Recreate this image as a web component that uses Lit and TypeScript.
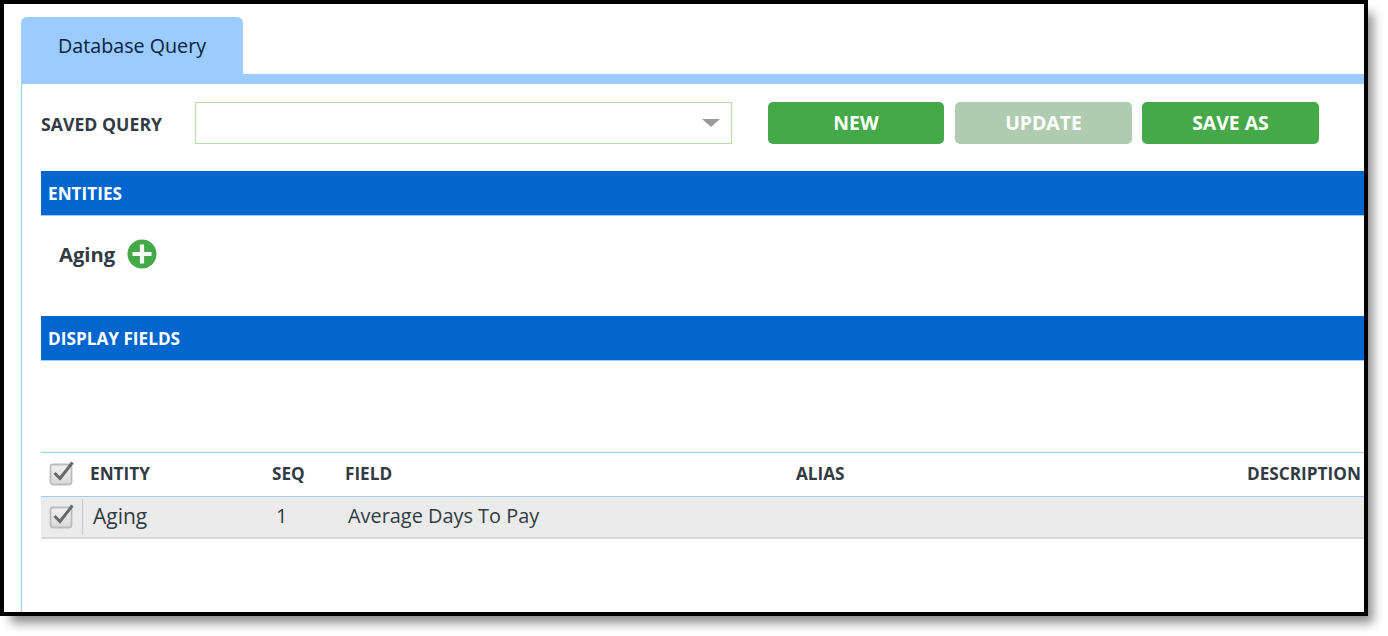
import { LitElement, html, css } from "lit";
import { customElement } from "lit/decorators.js";

const check = () => html`<svg class="cb" width="28" height="28" viewBox="0 0 28 28">
  <defs><linearGradient id="g" x1="0" y1="0" x2="0" y2="1"><stop offset="0" stop-color="#f2f2f2"/><stop offset="1" stop-color="#d8d8d8"/></linearGradient></defs>
  <rect x="2.5" y="6.5" width="21" height="20" rx="2.5" fill="url(#g)" stroke="#bcbcbc" stroke-width="1.8"/>
  <path d="M6.5 15 L12 20.5 L24.5 4.5" fill="none" stroke="#65696c" stroke-width="3"/>
</svg>`;

@customElement("app-root")
export class AppRoot extends LitElement {
  static styles = css`
    :host { display: block; width: 1388px; height: 636px; background: #fff; overflow: hidden;
      font-family: "Open Sans", "Noto Sans", sans-serif; color: #323b43; }
    .frame { box-sizing: border-box; width: 1368px; height: 616px; border: 4px solid #000; background: #fff;
      box-shadow: 8px 10px 10px -3px rgba(0,0,0,.45); padding: 13px 0 0 17px; overflow: hidden; display: flex; flex-direction: column; }
    .tab { box-sizing: border-box; width: 222px; height: 57px; background: #9bcbff; border-radius: 6px 6px 0 0;
      padding-left: 37px; padding-top: 15px; font-size: 19.7px; line-height: 28px; color: #0a2240; }
    .panel { flex: 1; border-left: 1px solid #9bcbff; border-top: 10px solid #9bcbff; padding: 18px 0 0 19px; }
    .query { display: flex; align-items: center; height: 42px; }
    .label { width: 154px; font-size: 17.7px; font-weight: 700; line-height: 20px; padding-top: 2px; white-space: nowrap; }
    .select { box-sizing: border-box; width: 537px; height: 42px; border: 1px solid #b7dca2; display: flex;
      align-items: center; justify-content: flex-end; padding-right: 11px; margin-right: 36px; }
    .arrow { width: 0; height: 0; border-left: 9px solid transparent; border-right: 9px solid transparent; border-top: 8px solid #9a9a9a; }
    .btn { height: 42px; width: 176px; border-radius: 5px; background: #45a949; color: #fff; font-size: 19.4px; font-weight: 700;
      display: flex; align-items: center; justify-content: center; margin-right: 11px; padding-bottom: 1px; box-sizing: border-box; }
    .btn.off { background: #afcbb0; width: 177px; margin-right: 10px; }
    .btn.last { width: 177px; }
    .bar { box-sizing: border-box; height: 45px; background: #0366cf; border-bottom: 1px solid #9bcbff; color: #fff;
      font-size: 17.2px; font-weight: 700; padding-left: 7px; display: flex; align-items: center; }
    .ent { margin-top: 27px; }
    .chip { display: flex; align-items: center; gap: 12px; height: 30px; margin: 24px 0 46px 18px; font-size: 20.2px; font-weight: 700; }
    .chip span { padding-bottom: 2px; }
    .chip svg { display: block; margin-top: -2px; }
    .gap { height: 91px; }
    .row { display: grid; grid-template-columns: 42px 182px 73px 451px 451px 1fr; align-items: center; }
    .head { box-sizing: content-box; height: 43px; border-top: 1px solid #9bcbff; border-bottom: 1px solid #9bcbff; font-size: 17.2px; font-weight: 700; }
    .head > span { padding-left: 7px; padding-bottom: 3px; white-space: nowrap; }
    .data { height: 40px; background: #ebebeb; border-bottom: 2px solid #d6d6d6; font-size: 19.9px; }
    .data > span { padding-left: 11px; padding-bottom: 4px; white-space: nowrap; }
    .data > span.entity { font-size: 21px; padding-left: 10px; padding-bottom: 2px; }
    .data > span.seq { padding-left: 11px; }
    .data > span.field { padding-left: 10px; }
    .boxcell { display: flex; align-items: center; justify-content: center; height: 100%; }
    .data .boxcell { border-right: 1px solid #c9c9c9; box-sizing: border-box; height: 36px; }
    .cb { display: block; margin-top: -5px; }
  `;

  render() {
    return html`<div class="frame">
      <div class="tab">Database Query</div>
      <div class="panel">
        <div class="query">
          <div class="label">SAVED QUERY</div>
          <div class="select"><div class="arrow"></div></div>
          <div class="btn">NEW</div>
          <div class="btn off">UPDATE</div>
          <div class="btn last">SAVE AS</div>
        </div>
        <div class="bar ent">ENTITIES</div>
        <div class="chip"><span>Aging</span>
          <svg width="30" height="30" viewBox="0 0 30 30">
            <circle cx="15" cy="15" r="14.5" fill="#45a949"/>
            <path d="M15 5.5v19M5.5 15h19" stroke="#fff" stroke-width="4.2"/>
          </svg>
        </div>
        <div class="bar">DISPLAY FIELDS</div>
        <div class="gap"></div>
        <div class="row head">
          <div class="boxcell">${check()}</div>
          <span>ENTITY</span><span>SEQ</span><span>FIELD</span><span>ALIAS</span><span>DESCRIPTION</span>
        </div>
        <div class="row data">
          <div class="boxcell">${check()}</div>
          <span class="entity">Aging</span><span class="seq">1</span><span class="field">Average Days To Pay</span><span></span><span></span>
        </div>
      </div>
    </div>`;
  }
}
